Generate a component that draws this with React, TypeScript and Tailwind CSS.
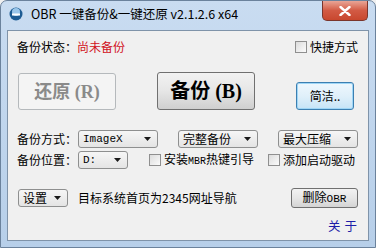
import React from 'react'

const cjk = "font-['Microsoft_YaHei','Noto_Sans_CJK_SC',sans-serif] whitespace-nowrap"

function Arrow() {
  return (
    <svg width="7" height="4" viewBox="0 0 7 4" className="shrink-0">
      <path d="M0 0 H7 L3.5 4 Z" fill="#1a1a1a" />
    </svg>
  )
}

function Combo({ label, w, mono }: { label: string; w: string; mono?: boolean }) {
  return (
    <div
      className={`${w} shrink-0 h-[18px] flex items-center justify-between pl-[4px] pr-[6px] border border-[#8e8f8f] rounded-[3px] bg-gradient-to-b from-[#f6f6f6] to-[#e4e4e4]`}
    >
      <span
        className={
          mono
            ? "font-['Liberation_Mono',monospace] text-[11px] text-black leading-none"
            : `${cjk} text-[12px] text-black leading-none`
        }
      >
        {label}
      </span>
      <Arrow />
    </div>
  )
}

function Check({ label }: { label: React.ReactNode }) {
  return (
    <div className="flex items-center gap-[3px] shrink-0">
      <div className="w-[12px] h-[12px] shrink-0 border border-[#8f8f8f] bg-gradient-to-br from-[#dcdcdc] to-[#fbfbfb]" />
      <span className={`${cjk} text-[12px] text-black leading-none`}>{label}</span>
    </div>
  )
}

export default function App() {
  return (
    <div className="w-[376px] h-[248px] bg-[#f0f0f0]">
      <div className="w-[376px] h-[248px] flex flex-col rounded-t-[7px] border border-[#6b829c] bg-gradient-to-b from-[#c9dcf1] to-[#b7cfe9]">
        {/* title bar */}
        <div className="h-[29px] flex items-start">
          <div className="flex items-center h-[26px] pl-[8px] gap-[8px]">
            <svg width="14" height="14" viewBox="0 0 14 14">
              <circle cx="7" cy="7" r="6.5" fill="#1d5c93" />
              <circle cx="7" cy="5" r="4" fill="#9ac6ea" />
              <rect x="3" y="6.5" width="8" height="2" fill="#ffffff" />
            </svg>
            <span className={`${cjk} text-[12.5px] text-black leading-none`}>
              OBR 一键备份&amp;一键还原 v2.1.2.6 x64
            </span>
          </div>
          <div className="ml-auto mr-[7px] w-[46px] h-[20px] flex items-center justify-center rounded-b-[5px] border border-t-0 border-[#7a352c] bg-gradient-to-b from-[#e8a596] via-[#d25a44] to-[#c8472e]">
            <svg width="12" height="10" viewBox="0 0 12 10">
              <path d="M1.5 1 L10.5 9 M10.5 1 L1.5 9" stroke="#ffffff" strokeWidth="2.4" strokeLinecap="round" />
            </svg>
          </div>
        </div>

        {/* client area */}
        <div className="mx-[6px] h-[211px] border border-[#7f93a9] bg-[#f0f0f0] flex flex-col pl-[9px] pr-[10px]">
          <div className="mt-[10px] h-[12px] flex items-center justify-between">
            <div className={`${cjk} text-[12px] leading-none flex`}>
              <span className="text-black">备份状态：</span>
              <span className="text-[#d0101c]">尚未备份</span>
            </div>
            <Check label="快捷方式" />
          </div>

          <div className="mt-[19px] h-[38px] flex items-end">
            <div className="w-[98px] h-[37px] ml-[1px] shrink-0 flex items-center justify-center border border-[#b5b9bc] rounded-[3px] bg-[#f4f4f4]">
              <span className="font-['Liberation_Serif','Noto_Sans_CJK_SC',serif] font-bold text-[18px] text-[#8a8a8a] leading-none whitespace-nowrap">
                还原 (R)
              </span>
            </div>
            <div className="ml-[41px] w-[98px] h-[38px] shrink-0 flex items-center justify-center border border-[#707070] rounded-[3px] bg-gradient-to-b from-[#f2f2f2] via-[#e6e6e6] to-[#cfcfcf]">
              <span className="font-['Liberation_Serif','Noto_Sans_CJK_SC',serif] font-bold text-[20px] text-black leading-none whitespace-nowrap">
                备份 (B)
              </span>
            </div>
            <div className="ml-[41px] w-[58px] h-[28px] shrink-0 flex items-center justify-center border border-[#3c7fb1] rounded-[3px] bg-gradient-to-b from-[#eef7fd] via-[#e0f0fa] to-[#c6e4f7] shadow-[inset_0_0_0_1px_#9fd6f6]">
              <span className={`${cjk} text-[12px] text-black leading-none`}>简洁..</span>
            </div>
          </div>

          <div className="mt-[20px] h-[18px] flex items-center">
            <span className={`${cjk} text-[12px] text-black leading-none w-[61px] shrink-0`}>备份方式：</span>
            <Combo label="ImageX" w="w-[80px]" mono />
            <div className="ml-[20px] shrink-0">
              <Combo label="完整备份" w="w-[80px]" />
            </div>
            <div className="ml-[20px] shrink-0">
              <Combo label="最大压缩" w="w-[80px]" />
            </div>
          </div>

          <div className="mt-[3px] h-[18px] flex items-center">
            <span className={`${cjk} text-[12px] text-black leading-none w-[61px] shrink-0`}>备份位置：</span>
            <Combo label="D:" w="w-[50px]" mono />
            <div className="ml-[21px] shrink-0">
              <Check
                label={
                  <>
                    安装<span className="font-['Liberation_Mono',monospace] text-[10px]">MBR</span>热键引导
                  </>
                }
              />
            </div>
            <div className="ml-[14px] shrink-0">
              <Check label="添加启动驱动" />
            </div>
          </div>

          <div className="mt-[19px] h-[20px] flex items-center">
            <div className="ml-[1px] shrink-0">
              <Combo label="设置" w="w-[50px]" />
            </div>
            <span className={`${cjk} text-[12px] text-black leading-none ml-[10px]`}>目标系统首页为2345网址导航</span>
            <div className="ml-auto w-[67px] h-[20px] shrink-0 flex items-center justify-center border border-[#707070] rounded-[3px] bg-gradient-to-b from-[#f2f2f2] via-[#e6e6e6] to-[#d4d4d4]">
              <span className={`${cjk} text-[12px] text-black leading-none`}>
                删除<span className="font-['Liberation_Mono',monospace] text-[11px]">OBR</span>
              </span>
            </div>
          </div>

          <div className="mt-[12px] flex justify-end">
            <span className={`${cjk} text-[12.5px] text-[#1e1ea8] leading-none tracking-[4px] mr-[-3px]`}>关于</span>
          </div>
        </div>
      </div>
    </div>
  )
}
